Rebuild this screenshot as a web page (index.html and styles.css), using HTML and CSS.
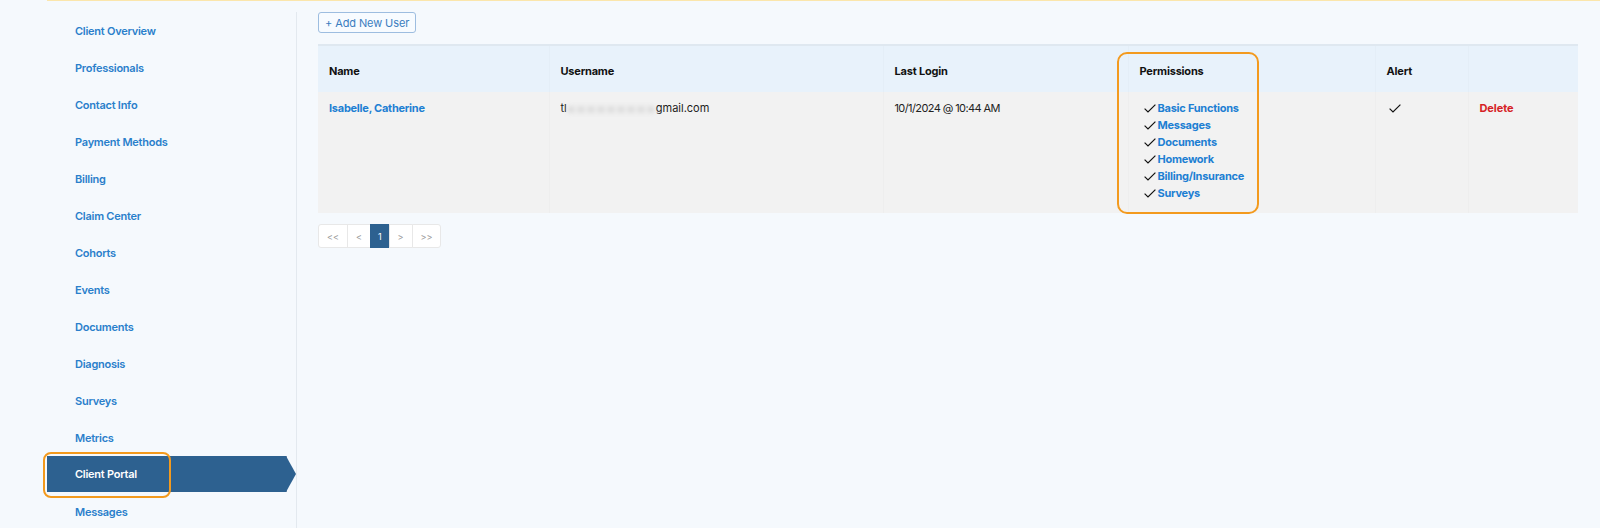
FILE: index.html
```html
<!DOCTYPE html>
<html lang="en">
  <head>
    <meta charset="UTF-8" />
    <meta name="viewport" content="width=device-width, initial-scale=1.0" />
    <title>Client Portal</title>
    <link rel="stylesheet" href="styles.css">
  </head>
  <body>
    <div class="page">
      <aside class="sidebar">
        <nav class="side-nav">
          <a class="side-link" href="#">Client Overview</a>
          <a class="side-link" href="#">Professionals</a>
          <a class="side-link" href="#">Contact Info</a>
          <a class="side-link" href="#">Payment Methods</a>
          <a class="side-link" href="#">Billing</a>
          <a class="side-link" href="#">Claim Center</a>
          <a class="side-link" href="#">Cohorts</a>
          <a class="side-link" href="#">Events</a>
          <a class="side-link" href="#">Documents</a>
          <a class="side-link" href="#">Diagnosis</a>
          <a class="side-link" href="#">Surveys</a>
          <a class="side-link" href="#">Metrics</a>
          <a class="side-link active" href="#">Client Portal<span class="mark mark-nav"></span></a>
          <a class="side-link" href="#">Messages</a>
        </nav>
      </aside>

      <main class="content">
        <button class="add-btn" type="button">+ Add New User</button>

        <div class="table-wrap">
          <table class="users">
            <colgroup>
              <col style="width: 231px" />
              <col style="width: 334px" />
              <col style="width: 245px" />
              <col style="width: 247px" />
              <col style="width: 93px" />
              <col />
            </colgroup>
            <thead>
              <tr>
                <th>Name</th>
                <th>Username</th>
                <th>Last Login</th>
                <th>Permissions</th>
                <th>Alert</th>
                <th></th>
              </tr>
            </thead>
            <tbody>
              <tr>
                <td><a class="name-link" href="#">Isabelle, Catherine</a></td>
                <td>tl<span class="blurred"></span>gmail.com</td>
                <td class="date">10/1/2024 @ 10:44 AM</td>
                <td>
                  <ul class="perms">
                    <li><svg class="check" viewBox="0 0 12 9"><polyline points="0.6,4.6 4,8 11.4,0.6" /></svg><a href="#">Basic Functions</a></li>
                    <li><svg class="check" viewBox="0 0 12 9"><polyline points="0.6,4.6 4,8 11.4,0.6" /></svg><a href="#">Messages</a></li>
                    <li><svg class="check" viewBox="0 0 12 9"><polyline points="0.6,4.6 4,8 11.4,0.6" /></svg><a href="#">Documents</a></li>
                    <li><svg class="check" viewBox="0 0 12 9"><polyline points="0.6,4.6 4,8 11.4,0.6" /></svg><a href="#">Homework</a></li>
                    <li><svg class="check" viewBox="0 0 12 9"><polyline points="0.6,4.6 4,8 11.4,0.6" /></svg><a href="#">Billing/Insurance</a></li>
                    <li><svg class="check" viewBox="0 0 12 9"><polyline points="0.6,4.6 4,8 11.4,0.6" /></svg><a href="#">Surveys</a></li>
                  </ul>
                </td>
                <td><svg class="check alert-check" viewBox="0 0 12 9"><polyline points="0.6,4.6 4,8 11.4,0.6" /></svg></td>
                <td><a class="delete-link" href="#">Delete</a></td>
              </tr>
            </tbody>
          </table>
          <div class="mark mark-perms"></div>
        </div>

        <div class="pager">
          <a class="pg" href="#">&lt;&lt;</a>
          <a class="pg" href="#">&lt;</a>
          <a class="pg current" href="#">1</a>
          <a class="pg" href="#">&gt;</a>
          <a class="pg" href="#">&gt;&gt;</a>
        </div>
      </main>
    </div>
  </body>
</html>
```

FILE: styles.css
```css
html,
body {
  margin: 0;
  height: 100%;
  background-color: #f5f9fd;
}
body {
  font-family: Inter, "Liberation Sans", sans-serif;
  overflow: hidden;
}
.page {
  display: flex;
  margin-left: 47px;
  border-top: 1px solid #fbe6ac;
  height: 527px;
}
.sidebar {
  width: 249px;
  flex-shrink: 0;
  margin-top: 11px;
  border-right: 1px solid #e3e9ef;
}
.side-nav {
  display: flex;
  flex-direction: column;
}
.side-link {
  position: relative;
  display: flex;
  align-items: center;
  height: 37px;
  padding-left: 28px;
  font-size: 11px;
  font-weight: 600;
  letter-spacing: -0.25px;
  color: #2a7fcb;
  text-decoration: none;
}
.side-link.active {
  height: 36px;
  margin: 0 9px 1px 0;
  background-color: #2d6190;
  border-right: 1px solid #8097ad;
  color: #fff;
}
.side-link.active::after {
  content: "";
  position: absolute;
  left: 100%;
  top: 0;
  border-left: 10px solid #2d6190;
  border-top: 18px solid transparent;
  border-bottom: 18px solid transparent;
}
.mark {
  position: absolute;
  border: 2px solid #f39a1e;
  box-sizing: border-box;
}
.mark-nav {
  left: -4px;
  top: -4px;
  width: 128px;
  height: 46px;
  border-radius: 8px;
}
.content {
  flex: 1;
  padding: 11px 22px 0 21px;
}
.add-btn {
  display: block;
  height: 21px;
  padding: 0 6px;
  font-family: inherit;
  font-size: 11px;
  letter-spacing: -0.1px;
  color: #3a7dc0;
  background-color: #f7fbff;
  border: 1px solid #9dbde0;
  border-radius: 3px;
  cursor: pointer;
}
.table-wrap {
  position: relative;
  margin-top: 11px;
}
.users {
  width: 100%;
  border-collapse: collapse;
  table-layout: fixed;
  border-top: 2px solid #dfe8f0;
}
.users th {
  height: 43px;
  padding: 3px 11px 0;
  text-align: left;
  font-size: 11px;
  font-weight: 700;
  letter-spacing: -0.2px;
  color: #111;
  background-color: #e8f2fb;
}
.users td {
  padding: 8px 11px 11px;
  vertical-align: top;
  font-size: 11px;
  line-height: 17px;
  color: #222;
  background-color: #f2f2f2;
}
.users th + th {
  border-left: 1px solid #e4eef7;
}
.users td + td {
  border-left: 1px solid #eeeeee;
}
.users td.date {
  letter-spacing: -0.6px;
}
.name-link {
  font-weight: 700;
  letter-spacing: -0.25px;
  color: #1d7fd3;
  text-decoration: none;
}
.blurred {
  display: inline-block;
  width: 86px;
  height: 7px;
  margin: 6px 2px 0 1px;
  vertical-align: top;
  background: repeating-linear-gradient(90deg, #dcdcdc 0 6px, #ebebeb 6px 10px);
  filter: blur(2px);
}
.perms {
  list-style: none;
  margin: 0;
  padding: 0 0 0 4px;
}
.perms li {
  display: flex;
  align-items: center;
}
.perms a {
  font-weight: 700;
  letter-spacing: -0.25px;
  color: #1d7fd3;
  text-decoration: none;
}
.check {
  width: 12px;
  height: 9px;
  margin-right: 2px;
  fill: none;
  stroke: #111;
  stroke-width: 1.2;
}
.alert-check {
  margin: 4px 0 0 2px;
}
.delete-link {
  font-weight: 700;
  letter-spacing: -0.1px;
  color: #d61f26;
  text-decoration: none;
}
.mark-perms {
  left: 799px;
  top: 8px;
  width: 142px;
  height: 162px;
  border-radius: 10px;
}
.pager {
  display: flex;
  margin-top: 11px;
}
.pg {
  display: flex;
  align-items: center;
  justify-content: center;
  height: 24px;
  padding: 0 8px;
  box-sizing: border-box;
  margin-right: -1px;
  font-size: 9px;
  color: #999;
  text-decoration: none;
  background-color: #fff;
  border: 1px solid #e8e8e8;
}
.pg:first-child {
  border-radius: 3px 0 0 3px;
}
.pg:last-child {
  border-radius: 0 3px 3px 0;
}
.pg.current {
  padding: 0 7px;
  color: #fff;
  background-color: #2d6190;
  border-color: #2d6190;
}
```
